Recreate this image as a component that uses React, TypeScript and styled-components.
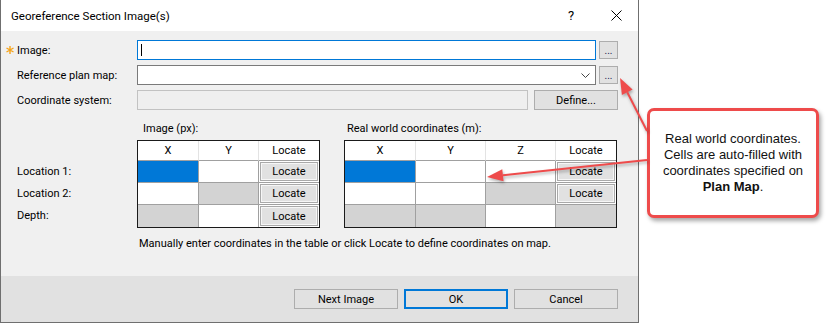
import * as React from 'react';
import styled, { createGlobalStyle } from 'styled-components';

const GlobalStyle = createGlobalStyle`
  html, body {
    margin: 0;
    padding: 0;
    background: #fff;
  }
  body {
    font-family: Roboto, "Noto Sans", "Liberation Sans", sans-serif;
    font-size: 11px;
    color: #000;
  }
`;

const Page = styled.div`
  position: relative;
  width: 828px;
  height: 328px;
  display: flex;
  align-items: flex-start;
  overflow: hidden;
`;

const Dialog = styled.div`
  width: 639px;
  height: 323px;
  box-sizing: border-box;
  border: 1px solid #6f6f6f;
  border-top: none;
  display: flex;
  flex-direction: column;
  background: #f0f0f0;
`;

const TitleBar = styled.div`
  height: 31px;
  flex: none;
  background: #fff;
  display: flex;
  align-items: center;
  padding-left: 10px;
`;

const Title = styled.div`
  flex: 1;
  font-size: 11.5px;
`;

const TitleButton = styled.div<{ $w: number }>`
  width: ${p => p.$w}px;
  height: 31px;
  display: flex;
  align-items: center;
  justify-content: center;
  font-size: 13px;
`;

const Body = styled.div`
  flex: 1;
  padding: 9px 20px 0 16px;
  display: flex;
  flex-direction: column;
`;

const FieldRow = styled.div`
  display: grid;
  grid-template-columns: 120px 1fr auto;
  align-items: center;
  height: 20px;
  margin-bottom: 5px;
`;

const Label = styled.div`
  display: flex;
  align-items: center;
  white-space: nowrap;
`;

const Star = styled.svg`
  margin-left: -11px;
  margin-right: 3px;
`;

const Input = styled.div<{ $focused?: boolean; $disabled?: boolean }>`
  height: 20px;
  box-sizing: border-box;
  border: 1px solid ${p => (p.$focused ? '#0078d7' : p.$disabled ? '#c2c2c2' : '#7a7a7a')};
  background: ${p => (p.$disabled ? '#efefef' : '#fff')};
  display: flex;
  align-items: center;
  justify-content: flex-end;
  padding: 0 5px 0 3px;
`;

const Caret = styled.span`
  width: 1px;
  height: 12px;
  background: #000;
  margin-right: auto;
`;

const SmallButton = styled.div`
  width: 19px;
  height: 18px;
  margin-left: 3px;
  box-sizing: border-box;
  background: #e1e1e1;
  border: 1px solid #adadad;
  display: flex;
  align-items: center;
  justify-content: center;
  font-size: 10px;
  color: #1a1a50;
`;

const Button = styled.div<{ $w: number; $default?: boolean; $ml?: number }>`
  width: ${p => p.$w}px;
  height: 20px;
  margin-left: ${p => p.$ml ?? 0}px;
  box-sizing: border-box;
  background: #e1e1e1;
  border: ${p => (p.$default ? '2px solid #0078d7' : '1px solid #adadad')};
  display: flex;
  align-items: center;
  justify-content: center;
`;

const Grids = styled.div`
  display: flex;
  margin-top: 6px;
`;

const RowLabels = styled.div`
  width: 120px;
  padding-top: 40px;
`;

const RowLabel = styled.div`
  height: 22px;
  line-height: 22px;
`;

const TableBlock = styled.div<{ $ml?: number }>`
  margin-left: ${p => p.$ml ?? 0}px;
`;

const Caption = styled.div<{ $pl: number }>`
  height: 16px;
  line-height: 16px;
  margin-bottom: 3px;
  padding-left: ${p => p.$pl}px;
`;

const Table = styled.div<{ $cols: string }>`
  display: grid;
  grid-template-columns: ${p => p.$cols};
  border: 1px solid #1a1a1a;
  background: #fff;
  width: fit-content;
`;

const HeadCell = styled.div<{ $last?: boolean }>`
  height: 20px;
  box-sizing: border-box;
  border-right: ${p => (p.$last ? 'none' : '1px solid #e3e3e3')};
  border-bottom: 1px solid #a0a0a0;
  text-align: center;
  line-height: 19px;
`;

type Kind = 'blue' | 'white' | 'gray' | 'button';

const cellBg: Record<Kind, string> = {
  blue: '#0078d7',
  white: '#fff',
  gray: '#d3d3d3',
  button: '#fff',
};

const Cell = styled.div<{ $kind: Kind; $last?: boolean; $bottom?: boolean }>`
  height: 22px;
  box-sizing: border-box;
  background: ${p => cellBg[p.$kind]};
  border-right: ${p => (p.$last ? 'none' : '1px solid #a0a0a0')};
  border-bottom: ${p => (p.$bottom ? 'none' : '1px solid #a0a0a0')};
  padding: 1px;
  display: flex;
`;

const LocateButton = styled.div`
  flex: 1;
  box-sizing: border-box;
  background: #e1e1e1;
  border: 1px solid #a9a9a9;
  box-shadow: inset 0 0 0 1px #f6f6f6;
  display: flex;
  align-items: center;
  justify-content: center;
`;

const Hint = styled.div`
  margin-top: 8px;
  padding-left: 122px;
  line-height: 16px;
`;

const Footer = styled.div`
  height: 46px;
  flex: none;
  background: #e1e1e1;
  display: flex;
  align-items: center;
  justify-content: flex-end;
  gap: 6px;
  padding-right: 20px;
`;

const Callout = styled.div`
  margin: 108px 0 0 8px;
  width: 172px;
  height: 110px;
  box-sizing: border-box;
  border: 3px solid #ee4b4b;
  border-radius: 7px;
  background: #fff;
  box-shadow: 2px 3px 4px rgba(0, 0, 0, 0.35);
  display: flex;
  align-items: center;
  justify-content: center;
  text-align: center;
  font-family: "Liberation Sans", Arial, sans-serif;
  font-size: 13px;
  line-height: 16px;
  color: #111;
`;

const Arrows = styled.svg`
  position: absolute;
  left: 0;
  top: 0;
  pointer-events: none;
  filter: drop-shadow(1px 2px 1.5px rgba(0, 0, 0, 0.3));
`;

const RED = '#ee4b4b';

const Arrow = ({ x1, y1, x2, y2 }: { x1: number; y1: number; x2: number; y2: number }) => {
  const a = Math.atan2(y2 - y1, x2 - x1);
  const len = 16;
  const w = 6;
  const bx = x2 - len * Math.cos(a);
  const by = y2 - len * Math.sin(a);
  const px = -Math.sin(a) * w;
  const py = Math.cos(a) * w;
  return (
    <g>
      <line x1={x1} y1={y1} x2={bx} y2={by} stroke={RED} strokeWidth={2} />
      <polygon points={`${x2},${y2} ${bx + px},${by + py} ${bx - px},${by - py}`} fill={RED} />
    </g>
  );
};

const imageRows: Kind[][] = [
  ['blue', 'white', 'button'],
  ['white', 'gray', 'button'],
  ['gray', 'white', 'button'],
];

const worldRows: Kind[][] = [
  ['blue', 'white', 'white', 'button'],
  ['white', 'white', 'gray', 'button'],
  ['gray', 'gray', 'white', 'gray'],
];

const Grid = ({ cols, heads, rows }: { cols: string; heads: string[]; rows: Kind[][] }) => (
  <Table $cols={cols}>
    {heads.map((h, i) => (
      <HeadCell key={h} $last={i === heads.length - 1}>{h}</HeadCell>
    ))}
    {rows.map((row, r) =>
      row.map((kind, c) => (
        <Cell key={`${r}-${c}`} $kind={kind} $last={c === row.length - 1} $bottom={r === rows.length - 1}>
          {kind === 'button' && <LocateButton>Locate</LocateButton>}
        </Cell>
      ))
    )}
  </Table>
);

export default function App() {
  return (
    <Page>
      <GlobalStyle />
      <Dialog>
        <TitleBar>
          <Title>Georeference Section Image(s)</Title>
          <TitleButton $w={46}>?</TitleButton>
          <TitleButton $w={44}>
            <svg width="11" height="11" viewBox="0 0 11 11">
              <path d="M0.5 0.5 L10.5 10.5 M10.5 0.5 L0.5 10.5" stroke="#000" strokeWidth="1" />
            </svg>
          </TitleButton>
        </TitleBar>
        <Body>
          <FieldRow>
            <Label>
              <Star width="8" height="8" viewBox="0 0 8 8">
                <path d="M4 0 V8 M0.5 2 L7.5 6 M0.5 6 L7.5 2" stroke="#f5a31a" strokeWidth="1.4" />
              </Star>
              Image:
            </Label>
            <Input $focused>
              <Caret />
            </Input>
            <SmallButton>...</SmallButton>
          </FieldRow>
          <FieldRow>
            <Label>Reference plan map:</Label>
            <Input>
              <svg width="9" height="5" viewBox="0 0 9 5">
                <path d="M0.5 0.5 L4.5 4.5 L8.5 0.5" stroke="#444" strokeWidth="1" fill="none" />
              </svg>
            </Input>
            <SmallButton>...</SmallButton>
          </FieldRow>
          <FieldRow>
            <Label>Coordinate system:</Label>
            <Input $disabled />
            <Button $w={84} $ml={6}>Define...</Button>
          </FieldRow>
          <Grids>
            <RowLabels>
              <RowLabel>Location 1:</RowLabel>
              <RowLabel>Location 2:</RowLabel>
              <RowLabel>Depth:</RowLabel>
            </RowLabels>
            <TableBlock>
              <Caption $pl={6}>Image (px):</Caption>
              <Grid cols="61px 60px 60px" heads={['X', 'Y', 'Locate']} rows={imageRows} />
            </TableBlock>
            <TableBlock $ml={24}>
              <Caption $pl={3}>Real world coordinates (m):</Caption>
              <Grid cols="71px 70px 70px 60px" heads={['X', 'Y', 'Z', 'Locate']} rows={worldRows} />
            </TableBlock>
          </Grids>
          <Hint>Manually enter coordinates in the table or click Locate to define coordinates on map.</Hint>
        </Body>
        <Footer>
          <Button $w={104}>Next Image</Button>
          <Button $w={104} $default>OK</Button>
          <Button $w={104}>Cancel</Button>
        </Footer>
      </Dialog>
      <Callout>
        <div>
          Real world coordinates.
          <br />
          Cells are auto-filled with
          <br />
          coordinates specified on
          <br />
          <b>Plan Map</b>.
        </div>
      </Callout>
      <Arrows width="828" height="328" viewBox="0 0 828 328">
        <Arrow x1={647} y1={131} x2={620} y2={78} />
        <Arrow x1={647} y1={160} x2={487} y2={177} />
      </Arrows>
    </Page>
  );
}
